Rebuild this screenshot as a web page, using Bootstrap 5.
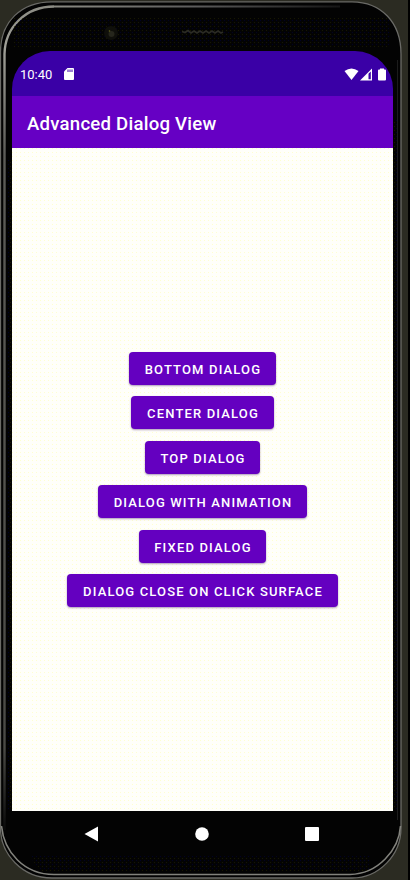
<!DOCTYPE html>
<html lang="en">
<head>
<meta charset="utf-8">
<meta name="viewport" content="width=device-width, initial-scale=1">
<title>Advanced Dialog View</title>
<link href="https://cdn.jsdelivr.net/npm/bootstrap@5.3.0/dist/css/bootstrap.min.css" rel="stylesheet">
<style>
  body { width: 410px; height: 880px; background: #2b2b22; font-family: Roboto, sans-serif; }
  .device { width: 410px; height: 880px; padding: 51px 17px 0 12px; isolation: isolate; }
  .shell { z-index: -1; }
  .screen { width: 381px; height: 760px; border-radius: 38px 38px 0 0; }
  .status { height: 45px; background: #3a00a6; padding: 1px 7px 0 8px; font-size: 13px; }
  .clock { padding-top: 1px; }
  .sd-icon { margin-left: 12px; }
  .title-bar { height: 52px; background: #6600c4; padding: 5px 15px 0; font-size: 18.6px; font-weight: 500; letter-spacing: .23px; }
  .content { background-color: #fffffa; background-image: radial-gradient(circle at .5px .5px, #ffffd0 .6px, transparent .7px); background-size: 4px 4px; padding-top: 203.8px; gap: 11.45px; }
  .btn-dialog { --bs-btn-color: #fff; --bs-btn-bg: #6400c0; --bs-btn-hover-color: #fff; --bs-btn-hover-bg: #5200b0; height: 33px; border: 0; border-radius: 4px; padding: 2px 0 0 1px; font-size: 13px; font-weight: 500; line-height: 31px; letter-spacing: 1.15px; box-shadow: 0 1px 2px rgba(50,0,90,.4); white-space: nowrap; }
  .w-bottom { width: 147px; } .w-center { width: 142.500px; } .w-top { width: 115px; }
  .w-anim { width: 209px; } .w-fixed { width: 127px; } .w-close { width: 271px; }
  .sys-nav { height: 46px; padding: 0 74px 0 72px; }
</style>
<script src="https://cdn.jsdelivr.net/npm/bootstrap@5.3.0/dist/js/bootstrap.bundle.min.js"></script>
</head>
<body class="m-0 overflow-hidden">
<div class="device position-relative">
  <svg class="shell position-absolute top-0 start-0" width="410" height="880" viewBox="0 0 410 880" aria-hidden="true">
    <defs>
      <linearGradient id="edge" gradientUnits="userSpaceOnUse" x1="50" x2="340" y1="0" y2="0"><stop offset="0" stop-color="#8c8c84"/><stop offset=".5" stop-color="#5c5c5c"/><stop offset="1" stop-color="#161616"/></linearGradient>
      <linearGradient id="side" gradientUnits="userSpaceOnUse" x1="0" x2="0" y1="6" y2="830"><stop offset="0" stop-color="#8c8c84"/><stop offset=".05" stop-color="#a0a098"/><stop offset=".18" stop-color="#5c5c58"/><stop offset=".9" stop-color="#4a4a46"/><stop offset="1" stop-color="#0a0a0a"/></linearGradient>
      <pattern id="grain" width="4" height="4" patternUnits="userSpaceOnUse"><rect width="1" height="1" fill="#00003c"/><rect x="2" y="2" width="1" height="1" fill="#262600"/></pattern>
    </defs>
    <rect x="408" width="2" height="880" fill="#000"/>
    <path d="M.5 52C.5 22 21 1.800 52 1.800H352C381 2 401 22 401 54V828C401 855 379 878 352 878H52C22 878 .5 854 .5 828Z" fill="#030303" stroke="#6a6a66" stroke-width="1.300"/>
    <path d="M4.500 830V54C5 28 25 6.500 54 6.500" fill="none" stroke="url(#side)" stroke-width="2.400"/>
    <rect x="54" y="5.500" width="286" height="2" fill="url(#edge)"/>
    <path d="M397.500 60V820" stroke="#1c1c1c" stroke-width="1"/>
    <path d="M1.500 826C4 852 24 874.500 54 874.500H350C378 874 399 850 400.500 826" fill="none" stroke="#82827c" stroke-width="1.600"/>
    <path d="M13 47V18H390V47ZM8 160H12V810H8ZM393 120H397V810H393ZM30 856H370V872H40Z" fill="url(#grain)" opacity=".6"/>
    <circle cx="111" cy="33" r="7" fill="#0f0f0a"/><circle cx="111.500" cy="34" r="3" fill="#26261c"/><circle cx="109.500" cy="31" r=".8" fill="#666620"/>
    <path d="M182 31.500L185 32.500L188 30.500L191 33L194 31L197 33L200 31L203 33L206 31L209 33L212 31L215 33L218 31L221 33L223 32" fill="none" stroke="#2b2b24" stroke-width="1.800"/>
  </svg>

  <div class="screen d-flex flex-column overflow-hidden">
    <div class="status d-flex align-items-center text-white flex-shrink-0">
      <span class="clock">10:40</span>
      <svg class="sd-icon" width="10" height="12" viewBox="0 0 10 12" aria-hidden="true"><path d="M3.500 0H9Q10 0 10 1V11Q10 12 9 12H1Q0 12 0 11V3.500Z" fill="#fff"/><path d="M4 1.500V4M6 1.500V4M8 1.500V4" stroke="#3a00a6"/></svg>
      <svg class="ms-auto" width="42" height="13" viewBox="0 0 42 13" aria-hidden="true">
        <path d="M.5 3Q7.500 -2.200 14.500 3L7.500 12Z" fill="#fff"/>
        <path d="M16 12.500L28 .500V12.500Z" fill="#fff"/><path d="M24.500 5.800L26.800 3.500V11.300H24.500Z" fill="#3a00a6"/>
        <path d="M36 .500H40V1.500H41Q42 1.500 42 2.500V11.500Q42 12.500 41 12.500H35Q34 12.500 34 11.500V2.500Q34 1.500 35 1.500H36Z" fill="#fff"/>
      </svg>
    </div>
    <header class="title-bar d-flex align-items-center text-white flex-shrink-0">Advanced Dialog View</header>
    <main class="content d-flex flex-column align-items-center flex-grow-1">
      <button class="btn btn-dialog w-bottom">BOTTOM DIALOG</button>
      <button class="btn btn-dialog w-center">CENTER DIALOG</button>
      <button class="btn btn-dialog w-top">TOP DIALOG</button>
      <button class="btn btn-dialog w-anim">DIALOG WITH ANIMATION</button>
      <button class="btn btn-dialog w-fixed">FIXED DIALOG</button>
      <button class="btn btn-dialog w-close">DIALOG CLOSE ON CLICK SURFACE</button>
    </main>
  </div>
  <nav class="sys-nav d-flex align-items-center justify-content-between">
    <svg width="15" height="16" viewBox="0 0 15 16" aria-label="Back"><path d="M.5 8L14 .5V15.500Z" fill="#fff"/></svg>
    <svg width="14" height="14" viewBox="0 0 14 14" aria-label="Home"><circle cx="7" cy="7" r="6.800" fill="#fff"/></svg>
    <svg width="14" height="14" viewBox="0 0 14 14" aria-label="Recent apps"><rect width="14" height="14" rx="1" fill="#fff"/></svg>
  </nav>
</div>
</body>
</html>
